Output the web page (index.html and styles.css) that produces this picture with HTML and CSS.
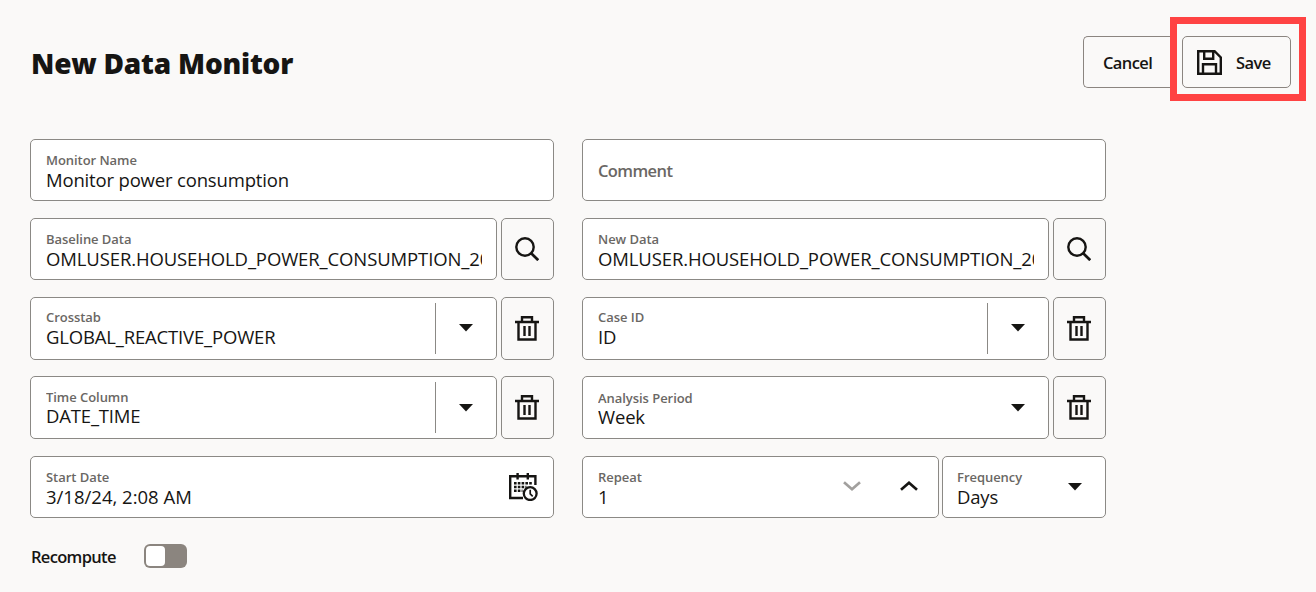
FILE: index.html
```
<!DOCTYPE html>
<html lang="en">
<head>
<meta charset="utf-8">
<title>New Data Monitor</title>
<link rel="stylesheet" href="styles.css">
</head>
<body>
<svg class="defs" width="0" height="0" aria-hidden="true">
  <symbol id="search" viewBox="0 0 24 24"><circle cx="10" cy="10" r="8.7" fill="none" stroke="currentColor" stroke-width="2.4"/><path d="M16.2 16.2l7 7" fill="none" stroke="currentColor" stroke-width="2.7"/></symbol>
  <symbol id="trash" viewBox="0 0 24 25"><path d="M0 6h24M7 6V1.2h10V6M3.5 6v17.5h17V6" fill="none" stroke="currentColor" stroke-width="2.4"/><path d="M9.5 10v10M14.5 10v10" fill="none" stroke="currentColor" stroke-width="2.4"/></symbol>
  <symbol id="save" viewBox="0 0 25 25"><path d="M1.2 1.2h16.4l6.2 6.2v16.4H1.2zM7.2 1.2v7.5h9V1.2M6 23.8V14.2h13v9.6" fill="none" stroke="currentColor" stroke-width="2.4"/></symbol>
  <symbol id="calendar" viewBox="0 0 29 28"><path d="M14 25H1.2V3.2h25.2V12M8.6 0v6.5M18.8 0v6.5" fill="none" stroke="currentColor" stroke-width="2.4"/><path d="M5 10.2h18M5 14h12.5M5 17.8h8.5" fill="none" stroke="currentColor" stroke-width="2.5" stroke-dasharray="2.6 1.2"/><circle cx="21.2" cy="20.6" r="6.4" fill="#fff" stroke="currentColor" stroke-width="2.3"/><path d="M21.2 16.8v4l2.5 2.5" fill="none" stroke="currentColor" stroke-width="1.7"/></symbol>
  <symbol id="caret" viewBox="0 0 14 8"><path d="M0 0h14L7 7.5z" fill="currentColor"/></symbol>
  <symbol id="chevron" viewBox="0 0 18 10"><path d="M1 1.2l8 7 8-7" fill="none" stroke="currentColor" stroke-width="2.7"/></symbol>
</svg>
<header class="header">
  <h1 class="title">New Data Monitor</h1>
  <div class="actions">
    <button class="btn cancel">Cancel</button>
    <div class="highlight"><button class="btn save"><svg class="ic-save"><use href="#save"/></svg>Save</button></div>
  </div>
</header>
<main class="form">
  <div class="row">
    <div class="field"><span class="label">Monitor Name</span><span class="value">Monitor power consumption</span></div>
  </div>
  <div class="row">
    <div class="field"><span class="placeholder">Comment</span></div>
  </div>
  <div class="row">
    <div class="field"><span class="label">Baseline Data</span><span class="value long">OMLUSER.HOUSEHOLD_POWER_CONSUMPTION_20</span></div>
    <button class="tool"><svg class="ic-search"><use href="#search"/></svg></button>
  </div>
  <div class="row">
    <div class="field"><span class="label">New Data</span><span class="value long">OMLUSER.HOUSEHOLD_POWER_CONSUMPTION_20</span></div>
    <button class="tool"><svg class="ic-search"><use href="#search"/></svg></button>
  </div>
  <div class="row">
    <div class="field combo tight"><div class="text"><span class="label">Crosstab</span><span class="value">GLOBAL_REACTIVE_POWER</span></div><div class="drop split"><svg class="ic-caret"><use href="#caret"/></svg></div></div>
    <button class="tool"><svg class="ic-trash"><use href="#trash"/></svg></button>
  </div>
  <div class="row">
    <div class="field combo tight"><div class="text"><span class="label">Case ID</span><span class="value">ID</span></div><div class="drop split"><svg class="ic-caret"><use href="#caret"/></svg></div></div>
    <button class="tool"><svg class="ic-trash"><use href="#trash"/></svg></button>
  </div>
  <div class="row">
    <div class="field combo time"><div class="text"><span class="label">Time Column</span><span class="value">DATE_TIME</span></div><div class="drop split"><svg class="ic-caret"><use href="#caret"/></svg></div></div>
    <button class="tool"><svg class="ic-trash"><use href="#trash"/></svg></button>
  </div>
  <div class="row">
    <div class="field combo period"><div class="text"><span class="label">Analysis Period</span><span class="value">Week</span></div><div class="drop"><svg class="ic-caret"><use href="#caret"/></svg></div></div>
    <button class="tool"><svg class="ic-trash"><use href="#trash"/></svg></button>
  </div>
  <div class="row">
    <div class="field combo"><div class="text"><span class="label">Start Date</span><span class="value date">3/18/24, 2:08 AM</span></div><div class="drop"><svg class="ic-cal"><use href="#calendar"/></svg></div></div>
  </div>
  <div class="row schedule">
    <div class="field combo"><div class="text"><span class="label">Repeat</span><span class="value">1</span></div><div class="stepper"><svg class="ic-chev off"><use href="#chevron"/></svg><svg class="ic-chev up"><use href="#chevron"/></svg></div></div>
    <div class="field combo frequency"><div class="text"><span class="label">Frequency</span><span class="value">Days</span></div><div class="drop"><svg class="ic-caret"><use href="#caret"/></svg></div></div>
  </div>
</main>
<div class="recompute"><span class="switch-label">Recompute</span><span class="switch"><span class="thumb"></span></span></div>
</body>
</html>
```
FILE: styles.css
```
* { box-sizing: border-box; }
body {
  margin: 0;
  width: 1316px;
  height: 592px;
  overflow: hidden;
  background: #faf9f8;
  color: #161513;
  font-family: "Open Sans", "Noto Sans", sans-serif;
}
svg { display: block; flex: none; }
.defs { position: absolute; }
.header {
  display: flex;
  justify-content: space-between;
  height: 139px;
  padding: 17px 10px 0 31px;
}
.title {
  margin: 27px 0 0;
  font-size: 28px;
  line-height: 38px;
  font-weight: 800;
  letter-spacing: -0.22px;
  white-space: nowrap;
}
.actions { display: flex; align-items: flex-start; }
.btn {
  display: flex;
  align-items: center;
  height: 52px;
  padding: 0;
  border: 1px solid #8b8580;
  border-radius: 5px;
  background: transparent;
  color: inherit;
  font: 600 16.5px "Open Sans", sans-serif;
  letter-spacing: -0.6px;
}
.cancel { width: 87px; margin-top: 19px; padding-left: 19px; border-right: 0; border-radius: 5px 0 0 5px; }
.highlight { width: 136px; height: 84px; padding: 12px 5px; border: 7px solid #ff4343; }
.save { width: 109px; padding-left: 14px; gap: 14px; }
.form {
  display: grid;
  grid-template-columns: 524px 524px;
  grid-template-rows: 62px 62px 63px 63px 62px;
  column-gap: 28px;
  row-gap: 16.75px;
  margin-left: 30px;
}
.row { display: flex; gap: 4px; min-width: 0; }
.schedule { gap: 3px; }
.field {
  flex: 1;
  min-width: 0;
  padding: 11px 14px 0 15px;
  border: 1px solid #8b8985;
  border-radius: 5px;
  background: #fff;
}
.label, .value { display: block; white-space: nowrap; overflow: hidden; }
.label { color: #6a6764; font-size: 13px; line-height: 18px; font-weight: 600; letter-spacing: -0.05px; }
.value { font-size: 18.5px; line-height: 24px; margin-top: -1px; letter-spacing: -0.17px; }
.long { letter-spacing: -0.12px; }
.date { letter-spacing: 0; }
.placeholder { display: block; color: #6a6764; font-size: 16.5px; line-height: 24px; font-weight: 600; letter-spacing: -0.6px; margin-top: 8px; }
.combo { display: flex; padding: 0; }
.text { flex: 1; min-width: 0; padding: 11px 0 0 15px; }
.tight .text { padding-top: 10px; }
.time .value { margin-top: -2px; }
.period .text { padding-top: 12px; }
.period .value { margin-top: -2px; }
.drop { display: flex; align-items: center; justify-content: center; width: 60px; margin: 5px 0; }
.split { border-left: 1px solid #8b8985; width: 61px; }
.frequency { flex: 0 0 164px; }
.frequency .text { padding-left: 14px; }
.stepper { display: flex; align-items: center; gap: 39px; padding-right: 20.5px; margin-top: -2px; }
.tool {
  display: flex;
  align-items: center;
  justify-content: center;
  width: 53px;
  padding: 0;
  border: 1px solid #8b8985;
  border-radius: 5px;
  background: transparent;
  color: inherit;
}
.tool svg { margin-right: 1px; }
.ic-search { width: 24px; height: 24px; }
.ic-trash { width: 24px; height: 25px; }
.ic-save { width: 25px; height: 25px; }
.ic-cal { width: 29px; height: 28px; }
.ic-caret { width: 14px; height: 8px; }
.ic-chev { width: 18px; height: 10px; }
.off { color: #a2a09e; }
.up { transform: rotate(180deg); }
.recompute { display: flex; align-items: center; height: 24px; margin: 26px 0 0 31px; }
.switch-label { width: 113px; font-size: 16.5px; font-weight: 600; letter-spacing: -0.68px; }
.switch { width: 43px; height: 24px; padding: 2px; border-radius: 6px; background: #8b857f; }
.thumb { display: block; width: 19px; height: 20px; border-radius: 4px; background: #fff; }
```
